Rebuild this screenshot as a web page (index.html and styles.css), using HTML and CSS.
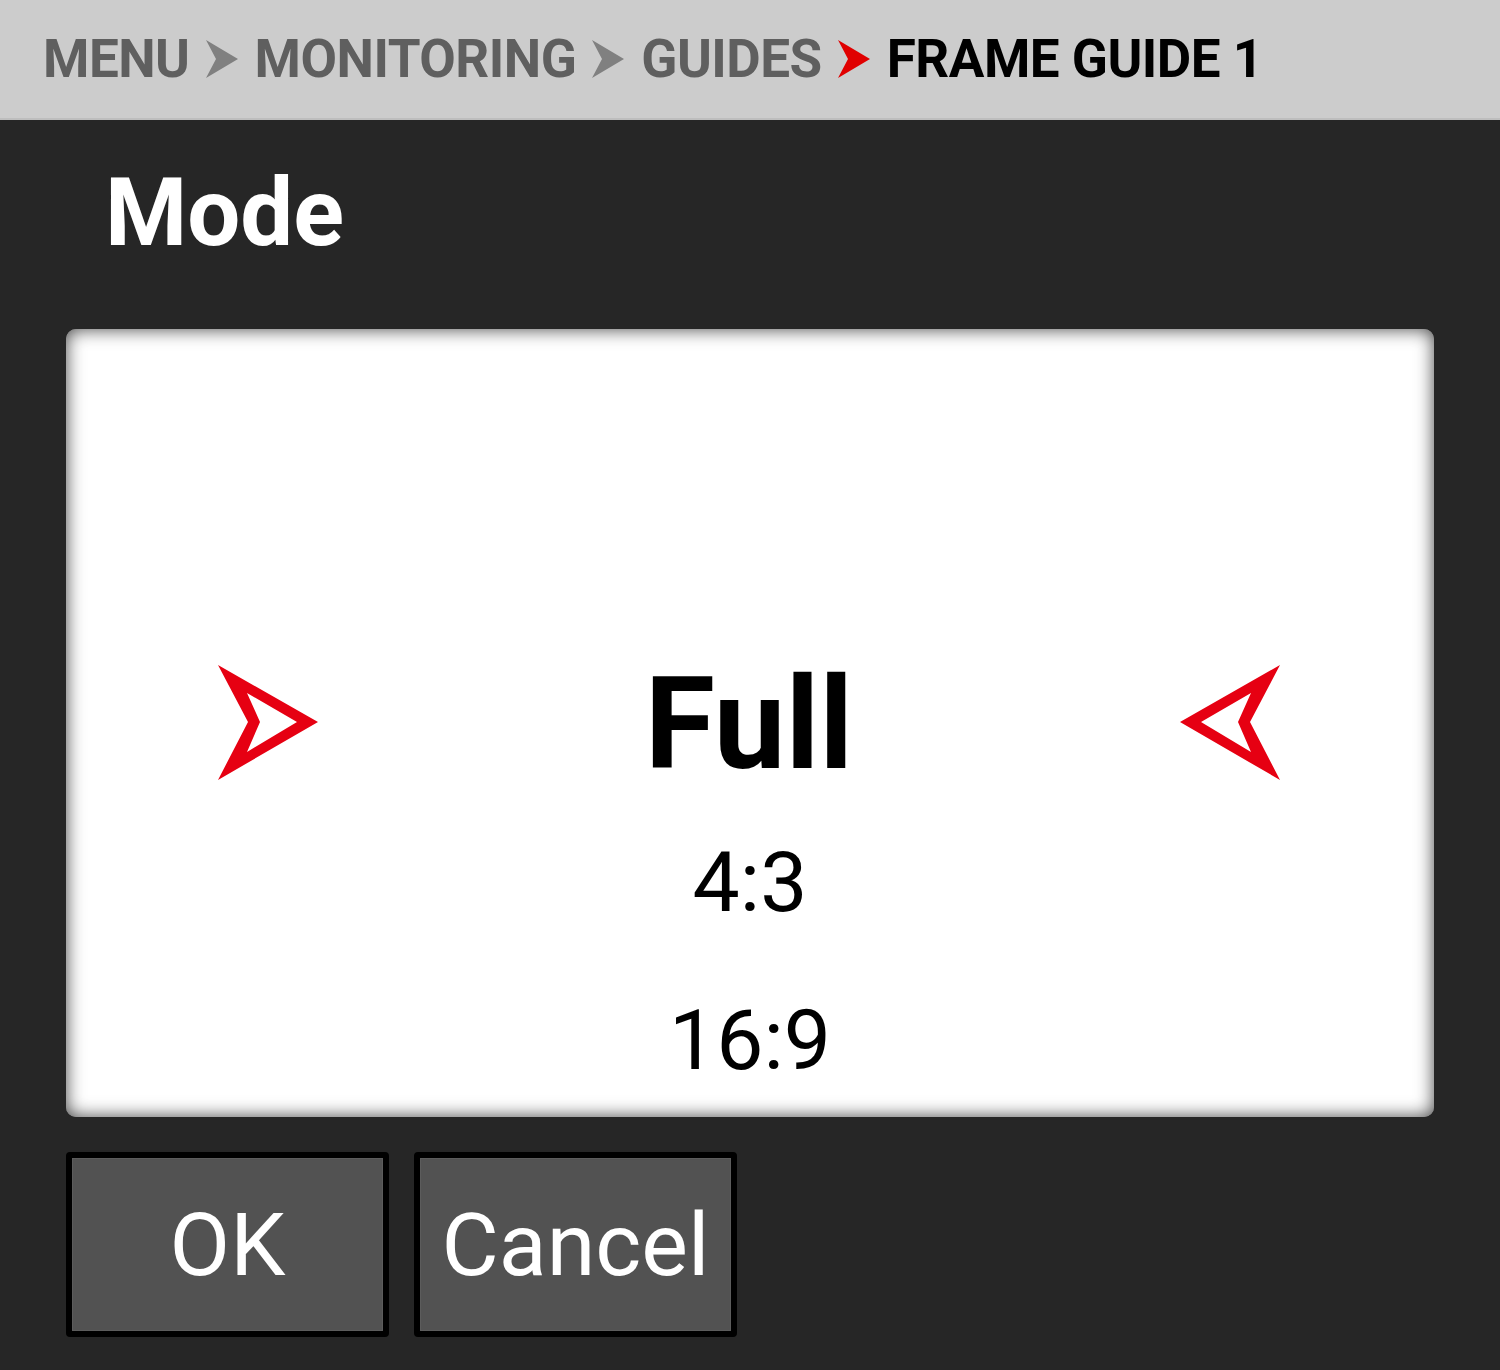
FILE: index.html
```html
<html>
    <head>
        <title>Frame Guide 1</title>
        <meta charset="utf-8">
        <link rel="stylesheet" href="styles.css">
    </head>
    <body>
        <header class="crumbs">
            <span class="crumb">MENU</span>
            <svg class="sep" viewBox="0 0 32 38"><polygon points="0,0 32,19 0,38 10,19"/></svg>
            <span class="crumb">MONITORING</span>
            <svg class="sep" viewBox="0 0 32 38"><polygon points="0,0 32,19 0,38 10,19"/></svg>
            <span class="crumb">GUIDES</span>
            <svg class="sep sep-active" viewBox="0 0 32 38"><polygon points="0,0 32,19 0,38 10,19"/></svg>
            <span class="crumb crumb-current">FRAME GUIDE 1</span>
        </header>
        <main>
            <h1 class="title">Mode</h1>
            <section class="picker">
                <div class="picker-row">
                    <svg class="arrow" viewBox="0 0 100 115"><path fill-rule="evenodd" d="M0 0 L100 57 L0 115 L30 57 Z M29 28 L42 57 L29 87 L79 57 Z"/></svg>
                    <span class="option option-selected">Full</span>
                    <svg class="arrow arrow-flip" viewBox="0 0 100 115"><path fill-rule="evenodd" d="M0 0 L100 57 L0 115 L30 57 Z M29 28 L42 57 L29 87 L79 57 Z"/></svg>
                </div>
                <span class="option option-first">4:3</span>
                <span class="option option-second">16:9</span>
            </section>
            <footer class="actions">
                <button class="btn">OK</button>
                <button class="btn">Cancel</button>
            </footer>
        </main>
    </body>
</html>
```
FILE: styles.css
```css
body{
    margin: 0;
    background-color: #262626;
    font-family: Roboto, "Liberation Sans", sans-serif;
    cursor: default;
}
.crumbs{
    height: 118px;
    border-bottom: 2px solid #bdbdbd;
    background-color: #cccccc;
    display: flex;
    align-items: center;
    padding-left: 43px;
    box-sizing: content-box;
}
.crumb{
    color: #5f5f5f;
    font-size: 53px;
    font-weight: bold;
    line-height: 1;
    letter-spacing: -0.5px;
}
.crumb-current{
    color: #000;
}
.sep{
    width: 32px;
    height: 38px;
    margin: 0 17px 0 16px;
    fill: #808080;
}
.sep-active{
    fill: #e00000;
}
main{
    padding: 0 66px;
}
.title{
    margin: 46px 0 69px 39px;
    color: #fff;
    font-size: 94px;
    line-height: 94px;
    font-weight: bold;
}
.picker{
    height: 788px;
    box-sizing: border-box;
    padding-top: 331px;
    background-color: #fff;
    border-radius: 10px;
    box-shadow: inset 0 0 18px rgba(0,0,0,0.75);
    display: flex;
    flex-direction: column;
    align-items: center;
    overflow: hidden;
}
.picker-row{
    width: 100%;
    box-sizing: border-box;
    padding: 0 154px 0 152px;
    display: flex;
    justify-content: space-between;
    align-items: center;
}
.arrow{
    width: 100px;
    height: 115px;
    fill: #e60012;
    margin-top: -4px;
}
.arrow-flip{
    transform: scaleX(-1);
}
.option{
    color: #000;
    font-size: 84px;
    line-height: 84px;
}
.option-selected{
    font-size: 128px;
    line-height: 128px;
    font-weight: bold;
}
.option-first{
    margin-top: 53px;
}
.option-second{
    margin-top: 74px;
}
.actions{
    display: flex;
    gap: 25px;
    margin-top: 35px;
}
.btn{
    width: 323px;
    height: 185px;
    box-sizing: border-box;
    border: 6px solid #000;
    border-radius: 4px;
    background-color: #525252;
    box-shadow: inset 0 0 0 1px #5c5c5c;
    color: #fff;
    font-family: Roboto, "Liberation Sans", sans-serif;
    font-size: 88px;
    padding: 0;
}
```
